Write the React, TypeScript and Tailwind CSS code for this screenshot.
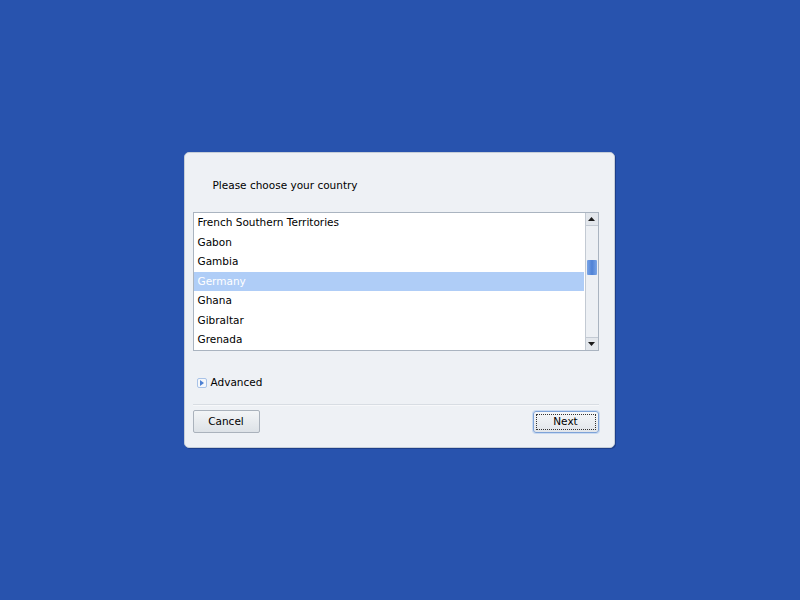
import React from "react";

const countries = [
  "French Southern Territories",
  "Gabon",
  "Gambia",
  "Germany",
  "Ghana",
  "Gibraltar",
  "Grenada",
];

function ScrollBar() {
  return (
    <div className="flex w-[13px] flex-col border-l border-[#c3cad3] bg-[#edf0f4]">
      <div className="flex h-[13px] items-center justify-center border-b border-[#c3cad3] bg-[#e3e7ec]">
        <svg width="7" height="4" viewBox="0 0 7 4">
          <path d="M3.5 0 L7 4 L0 4 Z" fill="#1a1a1a" />
        </svg>
      </div>
      <div className="relative flex-1">
        <div className="absolute left-[1px] top-[34px] h-[15px] w-[10px] rounded-[1px] bg-gradient-to-r from-[#7aa5e6] via-[#4f82d6] to-[#7aa5e6]" />
      </div>
      <div className="flex h-[13px] items-center justify-center border-t border-[#c3cad3] bg-[#e3e7ec]">
        <svg width="7" height="4" viewBox="0 0 7 4">
          <path d="M0 0 L7 0 L3.5 4 Z" fill="#1a1a1a" />
        </svg>
      </div>
    </div>
  );
}

export default function App() {
  return (
    <div
      className="flex h-[600px] w-[800px] items-center justify-center bg-[#2853ae] text-[10.5px] text-black"
      style={{ fontFamily: '"DejaVu Sans", sans-serif' }}
    >
      <div className="ml-[-2px] flex h-[296px] w-[431px] flex-col rounded-[5px] border border-[#c6ced8] bg-[#eef1f5] px-[8px] shadow-[1px_1px_0_#1d3f8a]">
        <div className="mt-[23px] h-[18px] pl-[20px] leading-[18px]">
          Please choose your country
        </div>

        <div className="mt-[18px] flex h-[139px] w-[406px] border border-[#aab4c0] bg-white">
          <div className="flex-1">
            {countries.map((c) => (
              <div
                key={c}
                className={
                  c === "Germany"
                    ? "mr-[1px] h-[19.5px] bg-[#afcdf7] pl-[4px] leading-[19.5px] text-white"
                    : "h-[19.5px] pl-[4px] leading-[19.5px]"
                }
              >
                {c}
              </div>
            ))}
          </div>
          <ScrollBar />
        </div>

        <div className="mt-[24px] flex h-[16px] items-center gap-[4px] pl-[4px]">
          <span className="flex h-[10px] w-[10px] items-center justify-center rounded-[2px] border border-[#a9c3e8] bg-[#f4f7fb]">
            <svg width="4" height="6" viewBox="0 0 4 6">
              <path d="M0 0 L4 3 L0 6 Z" fill="#4d80d2" />
            </svg>
          </span>
          <span>Advanced</span>
        </div>

        <div className="mt-[13px] h-[2px] w-[406px] border-t border-[#d8dde3] bg-[#f7f8fa]" />

        <div className="mt-[4px] flex w-[406px] justify-between">
          <button className="h-[23px] w-[67px] rounded-[2px] border border-[#aab2bc] bg-gradient-to-b from-[#f3f5f7] to-[#dde2e7] text-[10.5px]">
            Cancel
          </button>
          <button className="mt-[1px] h-[22px] w-[66px] rounded-[3px] border border-[#7ea3d8] bg-gradient-to-b from-[#f5f7f9] to-[#e1e5ea] p-[2px] text-[10.5px] shadow-[0_0_0_1px_#c9daf1]">
            <span className="flex h-full w-full items-center justify-center border border-dotted border-[#333]">
              Next
            </span>
          </button>
        </div>
      </div>
    </div>
  );
}
